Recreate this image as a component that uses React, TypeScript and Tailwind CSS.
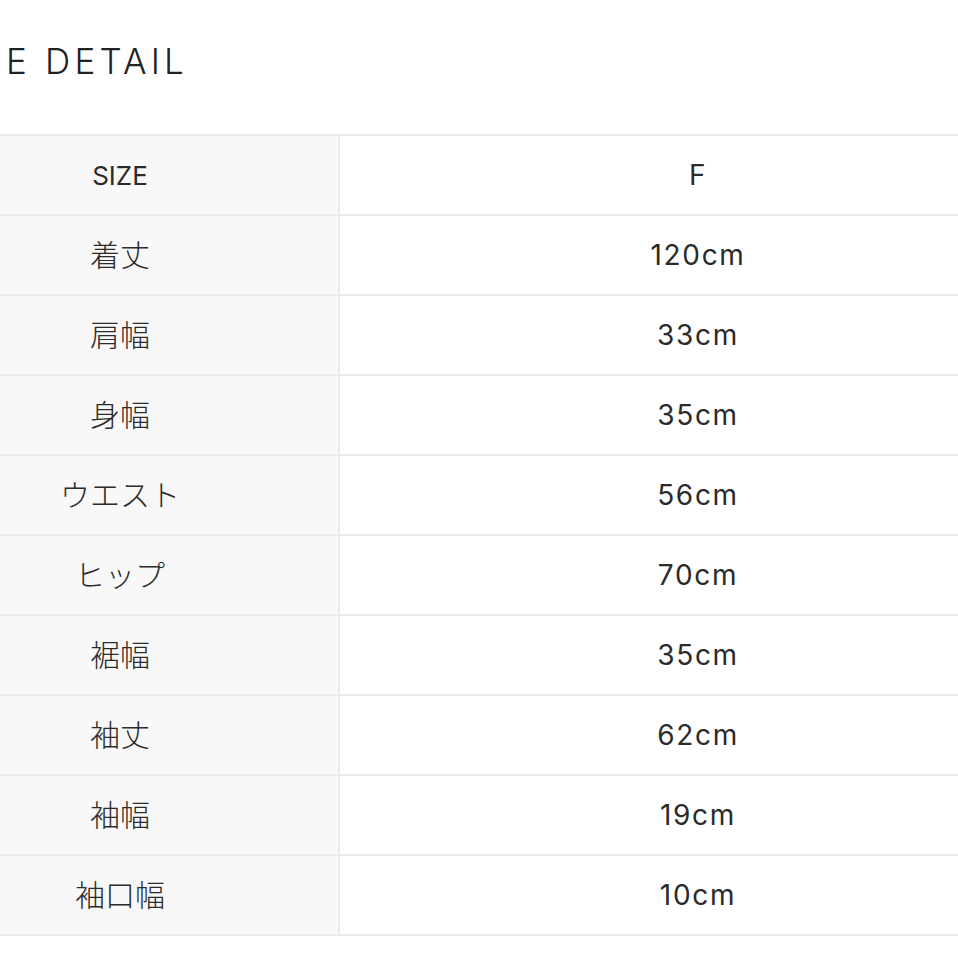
import React from "react";

const rows: [string, string, boolean][] = [
  ["SIZE", "F", false],
  ["着丈", "120cm", true],
  ["肩幅", "33cm", true],
  ["身幅", "35cm", true],
  ["ウエスト", "56cm", true],
  ["ヒップ", "70cm", true],
  ["裾幅", "35cm", true],
  ["袖丈", "62cm", true],
  ["袖幅", "19cm", true],
  ["袖口幅", "10cm", true],
];

export default function App() {
  return (
    <div
      className="w-[958px] h-[958px] overflow-hidden bg-white text-[#2b2b2b]"
      style={{ fontFamily: '"Inter", "Noto Sans CJK JP", sans-serif' }}
    >
      <div className="pt-[40px] pl-[6px] h-[134px]">
        <div className="text-[35px] font-light tracking-[0.12em] leading-[42px] text-[#222]">
          E DETAIL
        </div>
      </div>
      <div className="ml-[-98px] w-[1154px] border-t-2 border-[#ebebeb]">
        {rows.map(([k, v, jp], i) => (
          <div key={i} className="flex h-[80px] border-b-2 border-[#ebebeb]">
            <div
              className={
                jp
                  ? "w-[438px] bg-[#f8f8f8] border-r-2 border-[#ebebeb] flex items-center justify-center text-[30px] font-light pb-[4px]"
                  : "w-[438px] bg-[#f8f8f8] border-r-2 border-[#ebebeb] flex items-center justify-center text-[26px] font-normal"
              }
              style={jp ? { fontFamily: '"Noto Sans CJK JP", sans-serif' } : undefined}
            >
              {k}
            </div>
            <div className="flex-1 flex items-center justify-center text-[28px] font-normal tracking-[0.06em]">
              {v}
            </div>
          </div>
        ))}
      </div>
    </div>
  );
}
